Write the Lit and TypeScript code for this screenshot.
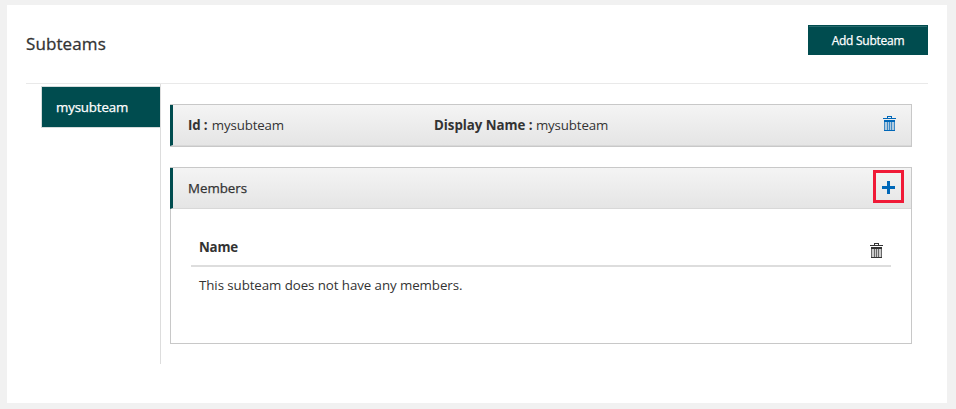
import { LitElement, html, css, svg } from "lit";
import { customElement, property } from "lit/decorators.js";

@customElement("trash-icon")
class TrashIcon extends LitElement {
  static styles = css`
    :host { display: block; width: 13px; height: 15px; }
    svg { display: block; fill: currentColor; }
    .body { opacity: 0.25; }
    .bar { opacity: 0.65; }
  `;
  render() {
    return html`<svg width="13" height="15" viewBox="0 0 13 15" shape-rendering="crispEdges">
      <path d="M4 0h5v2H8V1H5v1H4z" />
      <path d="M0 2h13v1H0z" />
      <path d="M1 4h11v2H1zM1 14h11v1H1z" />
      <path class="body" d="M1 6h11v8H1z" />
      ${[1, 4, 6, 8, 11].map((x) => svg`<rect class="bar" x=${x} y="6" width="1" height="8" />`)}
    </svg>`;
  }
}

@customElement("app-root")
class AppRoot extends LitElement {
  @property() name = "mysubteam";

  static styles = css`
    :host {
      display: block;
      box-sizing: border-box;
      height: 409px;
      padding: 5px 9px 6px 7px;
      background: #f1f1f1;
      color: #333;
      font: 13.3px/20px "Open Sans", "Noto Sans", sans-serif;
      letter-spacing: -0.07px;
    }
    * { box-sizing: border-box; }
    .card { height: 398px; padding: 20px 19px 0; background: #fff; }
    .head {
      display: flex;
      justify-content: space-between;
      align-items: flex-start;
      height: 59px;
      border-bottom: 1px solid #e9e9e9;
    }
    h1 {
      margin: 7px 0 0;
      font-size: 17px;
      line-height: 24px;
      font-weight: 500;
      letter-spacing: 0.1px;
      -webkit-text-stroke: 0.3px;
    }
    .add {
      width: 120px;
      height: 30px;
      padding: 2px 0 0;
      border: 1px solid #004c4f;
      box-shadow: inset 0 1px #286a6c;
      background: #004c4f;
      color: #fff;
      font: 500 12px/26px "Open Sans", "Noto Sans", sans-serif;
      letter-spacing: -0.25px;
      -webkit-text-stroke: 0.25px;
    }
    .content { display: flex; height: 280px; }
    .tabs { width: 135px; padding: 2px 0 0 15px; border-right: 1px solid #ddd; }
    .tab {
      height: 42px;
      padding-left: 14px;
      border: 1px solid #d5dcdc;
      border-right: 0;
      background: #004c4f;
      color: #fff;
      font-weight: 500;
      line-height: 40px;
      letter-spacing: -0.15px;
      -webkit-text-stroke: 0.25px;
    }
    .panels { flex: 1; padding: 20px 16px 0 9px; }
    .panel { border: 1px solid #c8c8c8; }
    .bar {
      display: flex;
      align-items: center;
      height: 41px;
      margin-left: -1px;
      padding-left: 15px;
      border-left: 3px solid #004c4f;
      border-bottom: 1px solid #d8d8d8;
      background: linear-gradient(#f4f4f4, #e5e5e5);
    }
    .members { height: 177px; margin-top: 20px; }
    .id { width: 246px; }
    .id b { margin-right: 1px; }
    .id, .display { letter-spacing: -0.15px; }
    .display { flex: 1; }
    .display b { letter-spacing: -0.03px; }
    .summary trash-icon { margin: -3px 15px 0 0; color: #0067b8; }
    .title { flex: 1; font-weight: 500; letter-spacing: 0; -webkit-text-stroke: 0.25px; }
    .plus {
      display: grid;
      place-items: center;
      width: 31px;
      height: 33px;
      padding-top: 2px;
      margin: -4px 7px 0 0;
      border: 3px solid #f01a37;
      color: #0067b8;
    }
    .plus svg { display: block; }
    .table { margin: 18px 20px 0; }
    .th {
      display: flex;
      justify-content: space-between;
      height: 40px;
      padding: 10px 8px 0;
      border-bottom: 2px solid #ddd;
      font-weight: 700;
      letter-spacing: -0.2px;
    }
    .th trash-icon { margin-top: 6px; }
    .td { padding: 8px 8px 0; }
  `;

  render() {
    return html`
      <main class="card">
        <header class="head">
          <h1>Subteams</h1>
          <button class="add">Add Subteam</button>
        </header>
        <div class="content">
          <nav class="tabs"><div class="tab">${this.name}</div></nav>
          <div class="panels">
            <section class="panel summary">
              <div class="bar">
                <span class="id"><b>Id :</b> ${this.name}</span>
                <span class="display"><b>Display Name :</b> ${this.name}</span>
                <trash-icon></trash-icon>
              </div>
            </section>
            <section class="panel members">
              <div class="bar">
                <span class="title">Members</span>
                <span class="plus">
                  <svg width="13" height="13" viewBox="0 0 13 13"><path fill="currentColor" d="M5 0h3v5h5v3H8v5H5V8H0V5h5z" /></svg>
                </span>
              </div>
              <div class="table">
                <div class="th"><span>Name</span><trash-icon></trash-icon></div>
                <div class="td">This subteam does not have any members.</div>
              </div>
            </section>
          </div>
        </div>
      </main>
    `;
  }
}
